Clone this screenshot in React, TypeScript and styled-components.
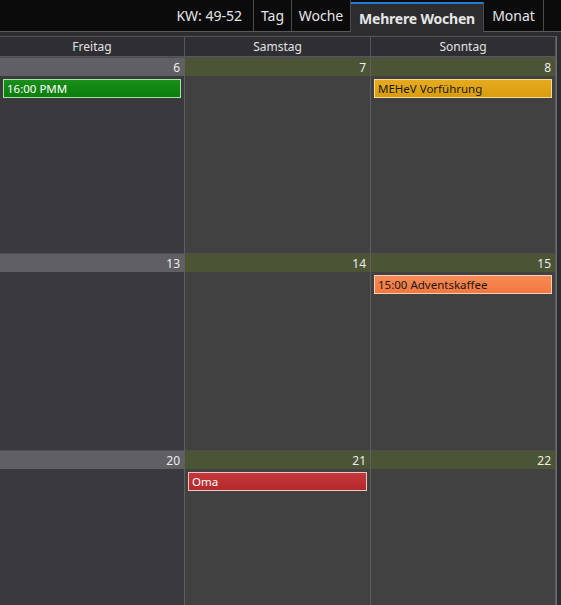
import React from "react";
import styled, { createGlobalStyle } from "styled-components";

const GlobalStyle = createGlobalStyle`
  html, body {
    margin: 0;
    padding: 0;
    background: #2d2d30;
    font-family: "Noto Sans", "Open Sans", sans-serif;
  }
`;

const Screen = styled.div`
  width: 561px;
  height: 605px;
  overflow: hidden;
  display: flex;
  flex-direction: column;
  background: #2d2d30;
`;

const TopBar = styled.div`
  height: 32px;
  flex: 0 0 32px;
  background: #0b0b0b;
  border-bottom: 1px solid #5a5a5e;
  display: flex;
  justify-content: flex-end;
  align-items: stretch;
  padding-right: 17px;
  box-sizing: border-box;
`;

const WeekLabel = styled.div`
  display: flex;
  align-items: center;
  padding: 0 11px 0 0;
  color: #e6e6e6;
  font-size: 14px;
  border-right: 1px solid #4a4a4e;
`;

const Tab = styled.div<{ $active?: boolean; $width: number }>`
  width: ${(p) => p.$width}px;
  display: flex;
  align-items: center;
  justify-content: center;
  font-size: 14px;
  color: #e6e6e6;
  white-space: nowrap;
  border-right: 1px solid #4a4a4e;
  margin-top: ${(p) => (p.$active ? "2px" : "0")};
  font-weight: ${(p) => (p.$active ? 700 : 400)};
  letter-spacing: ${(p) => (p.$active ? "-0.2px" : "0")};
  background: ${(p) => (p.$active ? "#2d2d30" : "transparent")};
  border-top: ${(p) => (p.$active ? "2px solid #1f7fd8" : "none")};
  margin-bottom: ${(p) => (p.$active ? "-1px" : "0")};
  box-sizing: border-box;
`;

const Band = styled.div`
  height: 4px;
  flex: 0 0 4px;
`;

const Body = styled.div`
  flex: 1;
  display: flex;
  min-height: 0;
`;

const Calendar = styled.div`
  width: 556px;
  display: grid;
  grid-template-columns: 185px 186px 185px;
  grid-template-rows: 20px 196px 197px 1fr;
  border-top: 1px solid #55555a;
`;

const ScrollStrip = styled.div`
  flex: 1;
  background: #2d2d30;
  border-left: 1px solid #6a6a6e;
`;

const DayName = styled.div`
  display: flex;
  align-items: center;
  justify-content: center;
  background: #2e2e33;
  color: #e2e2e2;
  font-size: 12px;
  border-right: 1px solid #55555a;
  border-bottom: 1px solid #55555a;
`;

const Cell = styled.div<{ $weekend?: boolean }>`
  display: flex;
  flex-direction: column;
  background: ${(p) => (p.$weekend ? "#414141" : "#3a393e")};
  border-right: 1px solid #5e5e62;
  border-top: 1px solid #4e4e52;
  min-height: 0;
`;

const DayNumber = styled.div<{ $weekend?: boolean }>`
  height: 18px;
  flex: 0 0 18px;
  display: flex;
  align-items: center;
  justify-content: flex-end;
  padding-right: 4px;
  font-size: 12px;
  color: #ececec;
  background: ${(p) => (p.$weekend ? "#4b5435" : "#5f5f64")};
`;

const eventColors = {
  green: { bg: "#0b7d0b", top: "#1a8f1a", border: "#a6e2a6", text: "#ffffff" },
  gold: { bg: "#d99c0c", top: "#e6ab1f", border: "#f7dc93", text: "#1a1a1a" },
  orange: { bg: "#f2783f", top: "#f88a55", border: "#fbd0b5", text: "#1a1a1a" },
  red: { bg: "#b5282b", top: "#c2393c", border: "#f2c2c2", text: "#ffffff" },
};

type EventColor = keyof typeof eventColors;

const Event = styled.div<{ $color: EventColor }>`
  margin: 3px 3px 0 3px;
  height: 19px;
  box-sizing: border-box;
  display: flex;
  align-items: center;
  padding-left: 3px;
  font-size: 11.5px;
  white-space: nowrap;
  overflow: hidden;
  color: ${(p) => eventColors[p.$color].text};
  border: 1px solid ${(p) => eventColors[p.$color].border};
  background: linear-gradient(
    ${(p) => eventColors[p.$color].top},
    ${(p) => eventColors[p.$color].bg}
  );
`;

type Day = { n: number; weekend: boolean; event?: { label: string; color: EventColor } };

const weeks: Day[][] = [
  [
    { n: 6, weekend: false, event: { label: "16:00 PMM", color: "green" } },
    { n: 7, weekend: true },
    { n: 8, weekend: true, event: { label: "MEHeV Vorführung", color: "gold" } },
  ],
  [
    { n: 13, weekend: false },
    { n: 14, weekend: true },
    { n: 15, weekend: true, event: { label: "15:00 Adventskaffee", color: "orange" } },
  ],
  [
    { n: 20, weekend: false },
    { n: 21, weekend: true, event: { label: "Oma", color: "red" } },
    { n: 22, weekend: true },
  ],
];

const App: React.FC = () => (
  <Screen>
    <GlobalStyle />
    <TopBar>
      <WeekLabel>KW: 49-52</WeekLabel>
      <Tab $width={38}>Tag</Tab>
      <Tab $width={59}>Woche</Tab>
      <Tab $width={133} $active>
        Mehrere Wochen
      </Tab>
      <Tab $width={60}>Monat</Tab>
    </TopBar>
    <Band />
    <Body>
      <Calendar>
        <DayName>Freitag</DayName>
        <DayName>Samstag</DayName>
        <DayName>Sonntag</DayName>
        {weeks.map((week) =>
          week.map((d) => (
            <Cell key={d.n} $weekend={d.weekend}>
              <DayNumber $weekend={d.weekend}>{d.n}</DayNumber>
              {d.event && <Event $color={d.event.color}>{d.event.label}</Event>}
            </Cell>
          ))
        )}
      </Calendar>
      <ScrollStrip />
    </Body>
  </Screen>
);

export default App;
